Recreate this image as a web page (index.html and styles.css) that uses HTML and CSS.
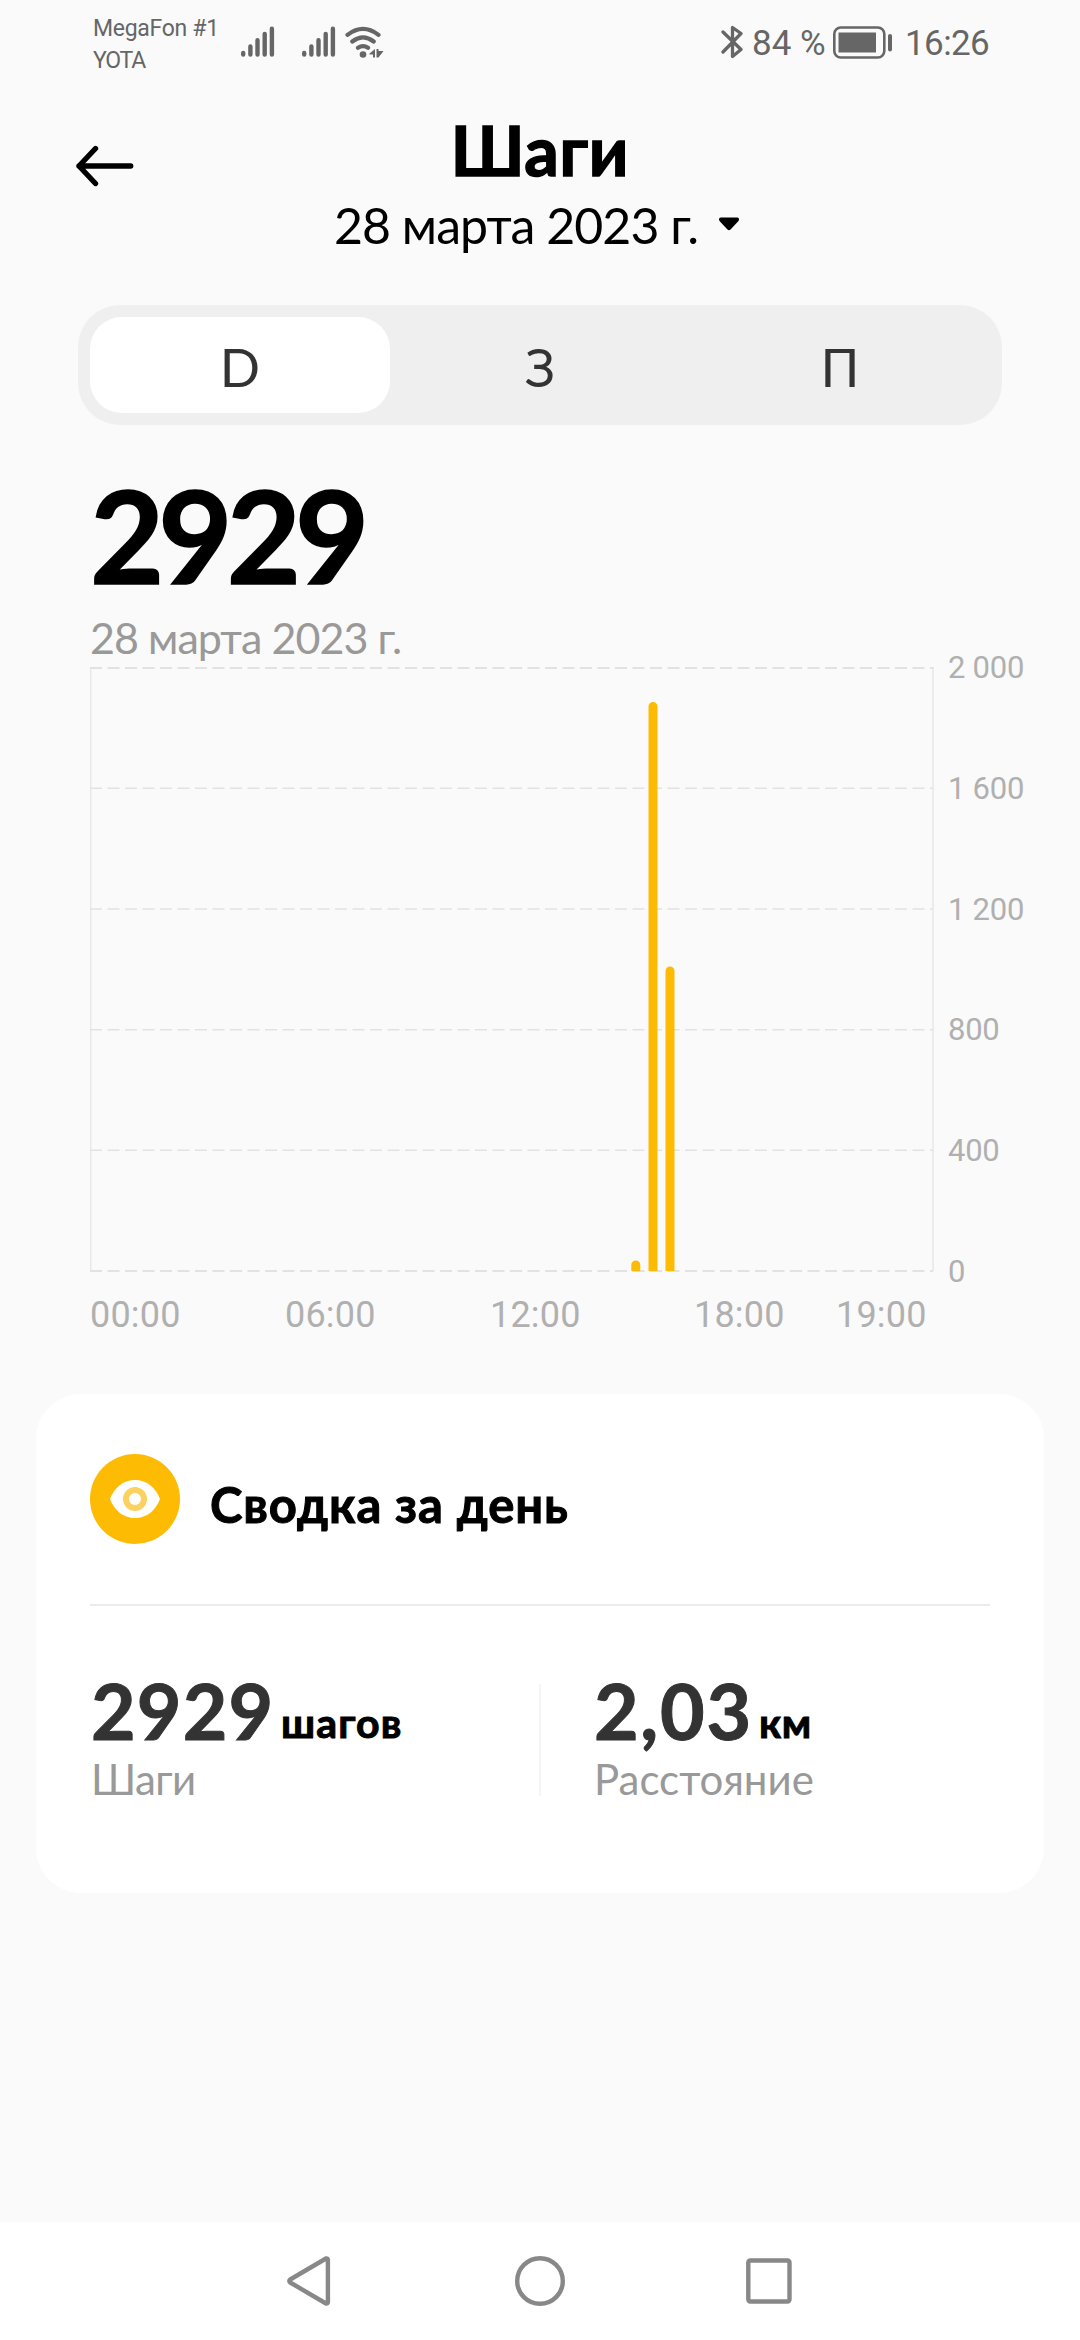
FILE: index.html
```html
<!DOCTYPE html>
<html lang="ru">
<head>
<meta charset="utf-8">
<title>Шаги</title>
<link rel="stylesheet" href="styles.css">
</head>
<body>
<div class="screen">
  <div class="status">
    <div class="carrier"><div>MegaFon #1</div><div class="carrier-second">YOTA</div></div>
    <svg class="signal" width="34" height="32" viewBox="0 0 34 32"><path d="M2.2 28.5V27M9.4 28.5V20.5M16.5 28.5V14.2M23.7 28.5V8M30.9 28.5V2.8" stroke-width="4.4"/></svg>
    <svg class="signal signal-second" width="34" height="32" viewBox="0 0 34 32"><path d="M2.2 28.5V27M9.4 28.5V20.5M16.5 28.5V14.2M23.7 28.5V8M30.9 28.5V2.8" stroke-width="4.4"/></svg>
    <svg class="wifi" width="39" height="34" viewBox="0 0 39 34"><path d="M2.5 8.8Q18 -3.200 33.5 8.800M7.300 15.500Q18 7.200 28.700 15.500M13 21.800Q18 18.400 23 21.800" stroke-width="4.2"/><circle class="solid" cx="18" cy="28.500" r="3.300"/><path class="solid" d="M24.500 27.500L30 23V31.500H28V28.500H24.500ZM31.500 23H33.500V25H38.500L33.500 31.500H31.500Z"/></svg>
    <div class="spacer"></div>
    <svg class="bluetooth" width="22" height="36" viewBox="0 0 22 36"><path d="M2 8L20 25.500L11.500 32.500V3.500L20 9.500L2 28" stroke-width="3.300"/></svg>
    <div class="percent">84 %</div>
    <svg class="battery" width="60" height="34" viewBox="0 0 60 34"><rect x="1.300" y="1.500" width="50" height="30" rx="6.500" stroke-width="2.600"/><rect class="solid" x="5.500" y="6.500" width="37.500" height="20"/><path d="M57 10V23.500" stroke-width="4"/></svg>
    <div class="clock">16:26</div>
  </div>

  <header class="header">
    <svg class="back" width="58" height="42" viewBox="0 0 58 42"><path d="M54.700 21H3M19.500 3.500L3 21L19.500 38.500"/></svg>
    <div class="heading">
      <h1 class="title">Шаги</h1>
      <div class="picker">28 марта 2023 г.<svg width="22" height="14" viewBox="0 0 22 14"><path d="M2.500 0.500H19.500Q22 1.500 20.500 4L12.500 12.500Q11 14 9.500 12.500L1.500 4Q0 1.500 2.500 0.500Z"/></svg></div>
    </div>
  </header>

  <div class="tabs">
    <div class="tab tab-active">D</div>
    <div class="tab">З</div>
    <div class="tab">П</div>
  </div>

  <div class="total">2929</div>
  <div class="total-date">28 марта 2023 г.</div>

  <div class="chart">
    <svg class="plot" width="844" height="605" viewBox="0 0 844 605">
      <path class="frame" d="M0.700 0V604.500M843 0V604.500"/>
      <path class="grid grid-edge" d="M0 1H843M0 604H843"/>
      <path class="grid" d="M0 121.300H843M0 242H843M0 362.700H843M0 483.300H843"/>
      <path class="bar" d="M541.300 604V598a4.500 4.500 0 0 1 9 0V604ZM558.500 604V39.500a4.500 4.500 0 0 1 9 0V604ZM575.500 604V304a4.500 4.500 0 0 1 9 0V604Z"/>
    </svg>
    <div class="scale"><span>2 000</span><span>1 600</span><span>1 200</span><span>800</span><span>400</span><span>0</span></div>
  </div>
  <div class="hours"><span>00:00</span><span>06:00</span><span>12:00</span><span>18:00</span><span>19:00</span></div>

  <section class="card">
    <div class="card-head">
      <svg width="90" height="90" viewBox="0 0 90 90"><circle cx="45" cy="45" r="45" fill="#fdbb04"/><path d="M20 45C24 34 33 26 45 26S66 34 70 45C66 56 57 64 45 64S24 56 20 45Z" fill="#fff"/><circle cx="45" cy="45" r="9" fill="none" stroke="#fbd262" stroke-width="6"/></svg>
      <h2 class="card-title">Сводка за день</h2>
    </div>
    <div class="stats">
      <div class="stat">
        <div class="value"><span class="number">2929</span><span class="unit">шагов</span></div>
        <div class="label label-steps">Шаги</div>
      </div>
      <div class="rule"></div>
      <div class="stat">
        <div class="value"><span class="number number-distance">2,03</span><span class="unit unit-km">км</span></div>
        <div class="label">Расстояние</div>
      </div>
    </div>
  </section>

  <nav class="nav">
    <svg width="52" height="52" viewBox="0 0 52 52"><path d="M41 3.500L5.200 24.500Q3.400 26 5.200 27.500L41 48.500Q42.900 48.900 42.900 47V5Q42.900 3.100 41 3.500Z"/></svg>
    <svg width="52" height="52" viewBox="0 0 52 52"><circle cx="26" cy="26" r="22.800"/></svg>
    <svg width="52" height="52" viewBox="0 0 52 52"><rect x="5.300" y="5.500" width="41.200" height="41" rx="2"/></svg>
  </nav>
</div>
</body>
</html>
```
FILE: styles.css
```css
* { box-sizing: border-box; }

body {
  margin: 0;
  background: #fafafa;
  font-family: Lato, Roboto, sans-serif;
  color: #000;
}

svg { display: block; flex: none; }

.screen {
  display: flex;
  flex-direction: column;
  width: 1080px;
  height: 2340px;
  white-space: nowrap;
}

/* Status bar */
.status {
  display: flex;
  align-items: flex-start;
  height: 88px;
  padding: 12px 91px 0 93px;
  font-family: Roboto, sans-serif;
  color: #666;
}
.status svg { fill: none; stroke: #666; stroke-linecap: round; stroke-linejoin: round; }
.status .solid { fill: #666; stroke: none; }
.carrier { width: 148px; padding-top: 1px; font-size: 23px; line-height: 31.500px; letter-spacing: -0.300px; }
.carrier-second { letter-spacing: -1.200px; }
.signal { margin-top: 14px; }
.signal-second { margin-left: 27px; }
.wifi { margin: 14px 0 0 9px; }
.spacer { flex: 1; }
.bluetooth { margin-top: 12px; }
.percent { width: 81px; margin-left: 9px; font-size: 35px; line-height: 64px; }
.battery { margin-top: 14px; }
.clock { width: 84px; margin-left: 12px; font-size: 35px; line-height: 64px; letter-spacing: -0.600px; }

/* Header */
.header {
  display: grid;
  grid-template-columns: 1fr auto 1fr;
  height: 217px;
  padding: 22px 76px 0;
}
.back { margin-top: 35px; fill: none; stroke: #000; stroke-width: 5.400; stroke-linecap: round; stroke-linejoin: round; }
.heading { text-align: center; }
.title { margin: 0; font-size: 68px; line-height: 80px; font-weight: 700; letter-spacing: 0.700px; -webkit-text-stroke: 1.500px #000; }
.picker {
  display: flex;
  align-items: center;
  gap: 20px;
  margin-top: 5px;
  margin-right: 6px;
  font-size: 50px;
  line-height: 60px;
  letter-spacing: -0.950px;
}
.picker svg { margin-top: -2px; }

/* Period switch */
.tabs {
  display: grid;
  grid-template-columns: repeat(3, 1fr);
  height: 120px;
  margin: 0 78px;
  padding: 12px;
  border-radius: 42px;
  background: #efefef;
}
.tab { height: 96px; border-radius: 32px; text-align: center; font-size: 53px; line-height: 100px; color: #333; }
.tab-active { background: #fff; }

/* Daily total */
.total { margin: 46px 0 0 90px; font-size: 128px; line-height: 128px; font-weight: 700; letter-spacing: -5.900px; -webkit-text-stroke: 1.500px #000; }
.total-date { margin: 13px 0 0 90px; font-size: 43px; line-height: 52px; letter-spacing: -0.950px; color: #999; }

/* Chart */
.chart { display: flex; height: 605px; margin: 3px 0 0 90px; }
.frame, .grid { fill: none; stroke: #e8e8e8; stroke-width: 1.500; }
.grid { stroke: #e2e2e2; stroke-dasharray: 12 5.500; }
.grid-edge { stroke-width: 2; }
.bar { fill: #fdbb04; }
.scale {
  display: flex;
  flex-direction: column;
  justify-content: space-between;
  height: 644px;
  margin: -19px 0 0 14px;
  font: 31px/40px Roboto, sans-serif;
  letter-spacing: -0.250px;
  color: #b0b0b0;
}
.hours {
  display: grid;
  grid-template-columns: 195px 205px 204px 142px 100px;
  margin: 21px 0 0 90px;
  font: 36px/44px Roboto, sans-serif;
  letter-spacing: 0.200px;
  color: #b0b0b0;
}

/* Summary card */
.card { height: 499px; margin: 57px 36px 0; padding: 60px 54px 0; border-radius: 45px; background: #fff; }
.card-head { display: flex; align-items: center; height: 152px; padding-bottom: 61px; border-bottom: 2px solid #ececec; }
.card-title { margin: 10px 0 0 30px; font-size: 49px; line-height: 60px; font-weight: 700; letter-spacing: 0.900px; -webkit-text-stroke: 1px #000; }
.stats { display: grid; grid-template-columns: 449px 2px 1fr; padding-top: 64px; }
.stat { padding-left: 1px; }
.rule + .stat { padding-left: 53px; }
.rule { height: 112px; margin-top: 14px; background: #f5f5f5; }
.value { display: flex; align-items: flex-end; }
.number { width: 190px; font-size: 77px; line-height: 80px; font-weight: 700; letter-spacing: 1.200px; color: #333; -webkit-text-stroke: 1px #333; }
.number-distance { width: 165px; letter-spacing: 1.700px; }
.unit { padding-bottom: 3px; font-size: 41px; line-height: 48px; font-weight: 700; letter-spacing: 1.200px; -webkit-text-stroke: 1px #000; }
.unit-km { letter-spacing: 0.500px; }
.label { margin-top: 4px; font-size: 42px; line-height: 50px; color: #999; }
.label-steps { letter-spacing: -0.600px; }

/* System navigation */
.nav {
  display: flex;
  justify-content: center;
  gap: 177px;
  height: 118px;
  margin-top: auto;
  padding-top: 33px;
  background: #fff;
}
.nav svg { fill: none; stroke: #888; stroke-width: 4.400; stroke-linejoin: round; }
```
